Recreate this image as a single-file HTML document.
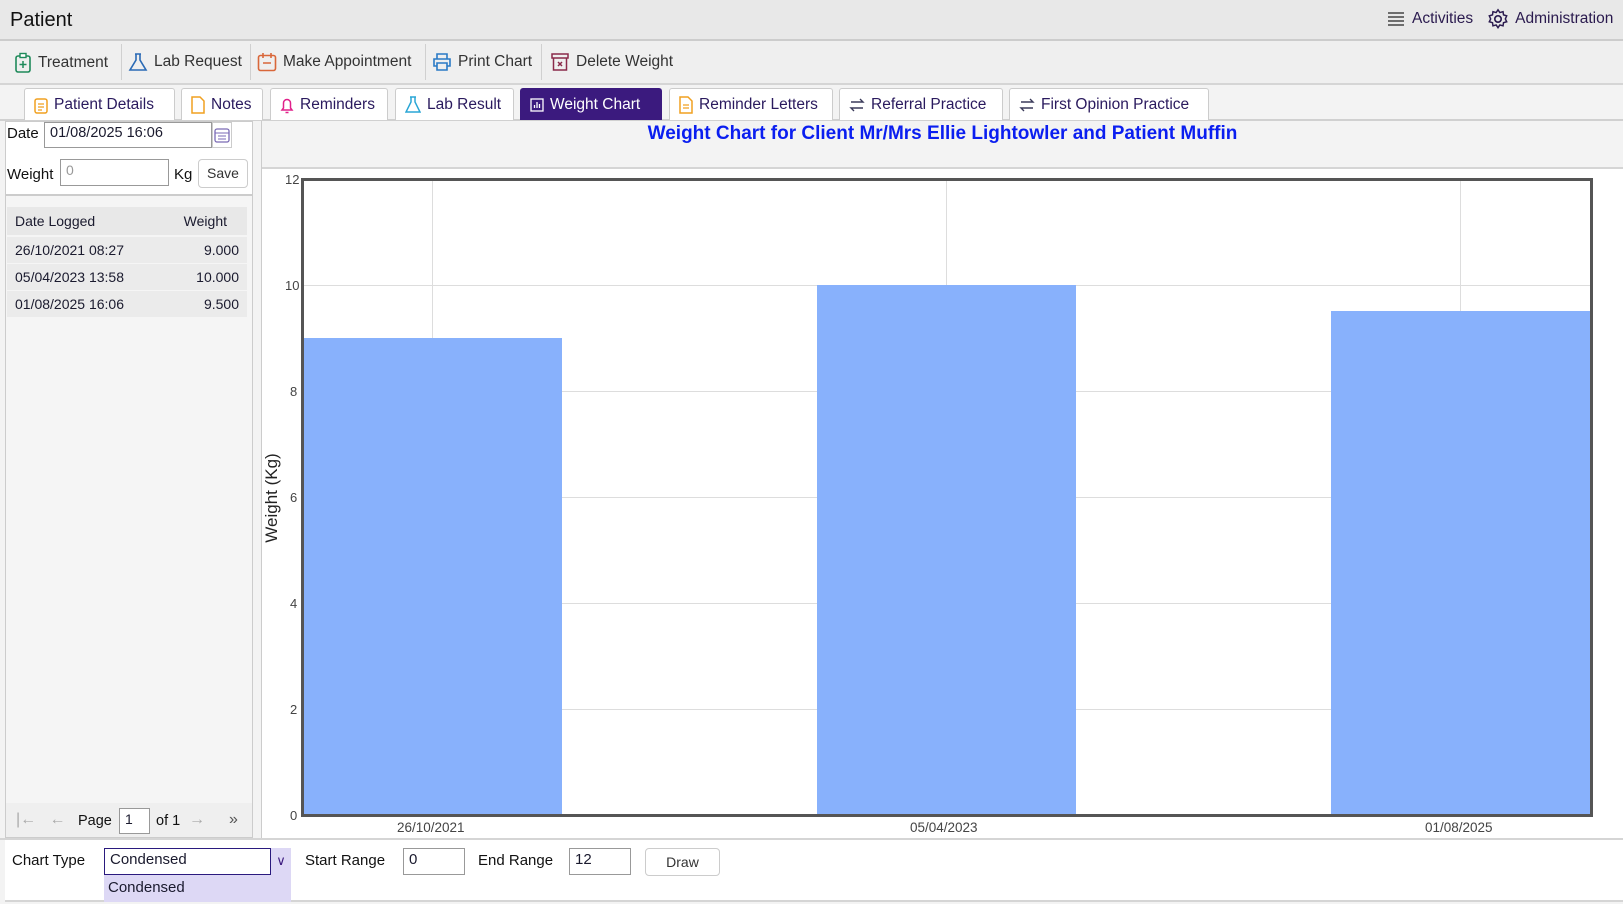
<!DOCTYPE html>
<html><head><meta charset="utf-8"><style>
*{box-sizing:border-box;margin:0;padding:0}
body{width:1623px;height:904px;background:#f3f3f3;font-family:"Liberation Sans",sans-serif;color:#1a1a2e;position:relative;overflow:hidden;font-size:15px}
.a{position:absolute;white-space:nowrap}
.tb{display:flex;align-items:center;gap:6px;position:absolute;top:52px;font-size:15.5px;color:#333;white-space:nowrap}
.sep{position:absolute;top:44px;width:1px;height:36px;background:#d0d0d0}
.tab{position:absolute;top:88px;height:32px;background:#fff;border:1px solid #ccc;border-bottom:none;border-radius:3px 3px 0 0;display:flex;align-items:center;padding:0 9px;gap:6px;font-size:15.5px;color:#2a1a5e;white-space:nowrap;overflow:hidden}
.tab.on{background:#3b1a7e;color:#fff;border-color:#3b1a7e}
.box{position:absolute;background:#fff;border:1px solid #999;font-size:14px;padding:2px 5px}
.lbl{position:absolute;font-size:15px;color:#111;white-space:nowrap}
.row{position:absolute;left:7px;width:240px;height:26px;background:#ebebeb;font-size:14px;display:flex;justify-content:space-between;align-items:center;padding:0 8px}
.grid{position:absolute;background:#ddd}
.bar{position:absolute;background:#88b1fc}
</style></head><body>
<div class="a" style="left:0;top:0;width:1623px;height:41px;background:#e8e8e8;border-bottom:2px solid #ccc"></div>
<div class="a" style="left:10px;top:9px;font-size:20px;color:#111">Patient</div>
<div class="a" style="left:1386px;top:8px;font-size:15.5px;display:flex;align-items:center;gap:6px;color:#2a1a4e">
<svg width="20" height="18"><g stroke="#444" stroke-width="1.5"><path d="M2 3h16M2 7h16M2 11h16M2 15h16"/></g></svg>Activities
<svg width="22" height="22" style="margin-left:8px" viewBox="0 0 24 24"><circle cx="12" cy="12" r="3.5" fill="none" stroke="#2a1a4e" stroke-width="1.8"/><path d="M12 2l2 3 3.5-1 .5 3.5 3.5 1-1.5 3.5 1.5 3-3.5 1-.5 3.5-3.5-1-2 3-2-3-3.5 1-.5-3.5-3.5-1 1.5-3-1.5-3.5 3.5-1 .5-3.5 3.5 1z" fill="none" stroke="#2a1a4e" stroke-width="1.6"/></svg>Administration</div>

<div class="a" style="left:0;top:41px;width:1623px;height:44px;background:#efefef;border-bottom:2px solid #d5d5d5"></div>
<div class="tb" style="left:14px"><svg width="18" height="22"><rect x="2" y="4" width="14" height="16" rx="2" fill="none" stroke="#1e8a5a" stroke-width="1.6"/><rect x="6" y="1.5" width="6" height="4" fill="#fff" stroke="#1e8a5a" stroke-width="1.4"/><path d="M9 9v7M5.5 12.5h7" stroke="#1e8a5a" stroke-width="1.5"/></svg>Treatment</div>
<div class="sep" style="left:121px"></div>
<div class="tb" style="left:128px"><svg width="20" height="20"><path d="M7 2h6M8 2v6L2 18h16L12 8V2" fill="none" stroke="#2a6ab5" stroke-width="1.6"/></svg>Lab Request</div>
<div class="sep" style="left:250px"></div>
<div class="tb" style="left:257px"><svg width="20" height="20"><rect x="1.5" y="3.5" width="17" height="15" rx="2" fill="none" stroke="#d9673a" stroke-width="1.6"/><path d="M6 1v5M14 1v5M6 11h8" stroke="#d9673a" stroke-width="1.6"/></svg>Make Appointment</div>
<div class="sep" style="left:425px"></div>
<div class="tb" style="left:432px"><svg width="20" height="20"><path d="M5 7V2h10v5M5 14H2V7h16v7h-3M5 11h10v7H5z" fill="none" stroke="#2a7ac5" stroke-width="1.6"/></svg>Print Chart</div>
<div class="sep" style="left:541px"></div>
<div class="tb" style="left:550px"><svg width="20" height="20"><rect x="2" y="2" width="16" height="4" fill="none" stroke="#8a2a4a" stroke-width="1.5"/><path d="M3.5 6v12h13V6M8 10l4 4M12 10l-4 4" fill="none" stroke="#8a2a4a" stroke-width="1.5"/></svg>Delete Weight</div>

<div class="a" style="left:0;top:119px;width:1623px;height:2px;background:#d0d0d0"></div>
<div class="tab" style="left:24px;width:151px"><svg width="14" height="18"><rect x="1" y="3" width="12" height="14" rx="2" fill="none" stroke="#f0a020" stroke-width="1.5"/><path d="M4 8h6M4 11h6M4 14h4" stroke="#f0a020" stroke-width="1.2"/></svg>Patient Details</div>
<div class="tab" style="left:181px;width:82px"><svg width="14" height="18"><path d="M1 1h8l4 4v12H1z" fill="none" stroke="#f0a020" stroke-width="1.5"/></svg>Notes</div>
<div class="tab" style="left:270px;width:118px"><svg width="14" height="18"><path d="M2 14h10l-1.5-2V7a3.5 3.5 0 00-7 0v5zM5.5 16.5h3" fill="none" stroke="#e0208a" stroke-width="1.5"/></svg>Reminders</div>
<div class="tab" style="left:395px;width:119px"><svg width="16" height="18"><path d="M5 1h6M6 1v5L1 16h14L10 6V1" fill="none" stroke="#2aa6d5" stroke-width="1.5"/></svg>Lab Result</div>
<div class="tab on" style="left:520px;width:142px"><svg width="14" height="16"><rect x="1" y="2" width="12" height="12" fill="none" stroke="#fff" stroke-width="1.3"/><path d="M4.5 11V8M7 11V5M9.5 11V7" stroke="#fff" stroke-width="1.3"/></svg>Weight Chart</div>
<div class="tab" style="left:669px;width:164px"><svg width="14" height="18"><path d="M1 1h8l4 4v12H1z" fill="none" stroke="#f0a020" stroke-width="1.5"/><path d="M4 9h6M4 12h6" stroke="#f0a020" stroke-width="1.2"/></svg>Reminder Letters</div>
<div class="tab" style="left:839px;width:164px"><svg width="16" height="18"><path d="M2 6h12l-3-3M14 12H2l3 3" fill="none" stroke="#3a3a5a" stroke-width="1.4"/></svg>Referral Practice</div>
<div class="tab" style="left:1009px;width:200px"><svg width="16" height="18"><path d="M2 6h12l-3-3M14 12H2l3 3" fill="none" stroke="#3a3a5a" stroke-width="1.4"/></svg>First Opinion Practice</div>

<div class="a" style="left:5px;top:121px;width:248px;height:717px;background:#f5f5f5;border:1px solid #ccc"></div>
<div class="a" style="left:6px;top:122px;width:246px;height:74px;background:#fff;border-bottom:2px solid #ccc"></div>
<div class="lbl" style="left:7px;top:125px">Date</div>
<div class="box" style="left:44px;top:122px;width:168px;height:26px;font-size:14.5px">01/08/2025 16:06</div>
<div class="a" style="left:212px;top:122px;width:20px;height:26px;border:1px solid #ccc;background:#fff"><svg width="18" height="20" style="margin-top:3px"><rect x="2" y="3" width="14" height="13" rx="2" fill="none" stroke="#7a6ab5" stroke-width="1.3"/><path d="M2 7h14M5 10h8M5 13h8" stroke="#7a6ab5" stroke-width="1"/></svg></div>
<div class="lbl" style="left:7px;top:166px">Weight</div>
<div class="box" style="left:60px;top:159px;width:109px;height:27px;color:#999">0</div>
<div class="lbl" style="left:174px;top:166px">Kg</div>
<div class="a" style="left:198px;top:159px;width:50px;height:29px;border:1px solid #ccc;border-radius:4px;background:#fff;font-size:14px;text-align:center;line-height:27px;color:#333">Save</div>
<div class="row" style="top:207px;height:28px;background:#e8e8e8;padding-left:8px;padding-right:20px"><span>Date Logged</span><span>Weight</span></div>
<div class="row" style="top:237px"><span>26/10/2021 08:27</span><span>9.000</span></div>
<div class="row" style="top:264px"><span>05/04/2023 13:58</span><span>10.000</span></div>
<div class="row" style="top:291px"><span>01/08/2025 16:06</span><span>9.500</span></div>
<div class="a" style="left:6px;top:803px;width:246px;height:34px;background:#efefef"></div>
<div class="a" style="left:16px;top:811px;color:#aaa;font-size:16px">|←&nbsp;&nbsp;&nbsp;←</div>
<div class="lbl" style="left:78px;top:813px;font-size:14.5px">Page</div>
<div class="box" style="left:119px;top:808px;width:31px;height:26px">1</div>
<div class="lbl" style="left:156px;top:813px;font-size:14.5px">of 1</div>
<div class="a" style="left:189px;top:811px;color:#aaa;font-size:16px">→</div>
<div class="a" style="left:229px;top:811px;color:#555;font-size:16px">»</div>

<div class="a" style="left:261px;top:121px;width:1362px;height:717px;background:#fff;border-left:1px solid #ccc"></div>
<div class="a" style="left:262px;top:121px;width:1361px;height:48px;background:#f3f3f3;border-bottom:2px solid #d5d5d5"></div>
<div class="a" style="left:262px;top:123px;width:1361px;text-align:center;font-weight:bold;font-size:19px;color:#0a1ef0">Weight Chart for Client Mr/Mrs Ellie Lightowler and Patient Muffin</div>
<div class="grid" style="left:302px;top:285px;width:1289px;height:1px"></div>
<div class="grid" style="left:302px;top:391px;width:1289px;height:1px"></div>
<div class="grid" style="left:302px;top:497px;width:1289px;height:1px"></div>
<div class="grid" style="left:302px;top:603px;width:1289px;height:1px"></div>
<div class="grid" style="left:302px;top:709px;width:1289px;height:1px"></div>
<div class="grid" style="left:432px;top:179px;width:1px;height:636px"></div>
<div class="grid" style="left:946px;top:179px;width:1px;height:636px"></div>
<div class="grid" style="left:1460px;top:179px;width:1px;height:636px"></div>
<div class="bar" style="left:302px;top:338px;width:260px;height:477px"></div>
<div class="bar" style="left:817px;top:285px;width:259px;height:530px"></div>
<div class="bar" style="left:1331px;top:311px;width:260px;height:504px"></div>
<div class="a" style="left:301px;top:178px;width:1292px;height:639px;border:3px solid #555"></div>
<div class="a" style="left:285px;top:172px;font-size:13px;color:#444">12</div>
<div class="a" style="left:285px;top:278px;font-size:13px;color:#444">10</div>
<div class="a" style="left:290px;top:384px;font-size:13px;color:#444">8</div>
<div class="a" style="left:290px;top:490px;font-size:13px;color:#444">6</div>
<div class="a" style="left:290px;top:596px;font-size:13px;color:#444">4</div>
<div class="a" style="left:290px;top:702px;font-size:13px;color:#444">2</div>
<div class="a" style="left:290px;top:808px;font-size:13px;color:#444">0</div>
<div class="a" style="left:222px;top:488px;font-size:17px;color:#222;transform:rotate(-90deg);width:100px;text-align:center">Weight (Kg)</div>
<div class="a" style="left:397px;top:820px;font-size:13.5px;color:#444">26/10/2021</div>
<div class="a" style="left:910px;top:820px;font-size:13.5px;color:#444">05/04/2023</div>
<div class="a" style="left:1425px;top:820px;font-size:13.5px;color:#444">01/08/2025</div>

<div class="a" style="left:0;top:838px;width:1623px;height:2px;background:#d5d5d5"></div>
<div class="a" style="left:5px;top:840px;width:1618px;height:62px;background:#fff;border-bottom:2px solid #d5d5d5"></div>
<div class="lbl" style="left:12px;top:852px">Chart Type</div>
<div class="box" style="left:104px;top:848px;width:167px;height:27px;border:1px solid #2a1a7e;font-size:15px">Condensed</div>
<div class="a" style="left:271px;top:848px;width:20px;height:27px;background:#ddd8f5;color:#3b1a7e;text-align:center;line-height:25px;font-size:13px">∨</div>
<div class="a" style="left:104px;top:875px;width:187px;height:27px;background:#ddd8f5;font-size:15px;padding:4px 4px">Condensed</div>
<div class="lbl" style="left:305px;top:852px">Start Range</div>
<div class="box" style="left:403px;top:848px;width:62px;height:27px;font-size:15px">0</div>
<div class="lbl" style="left:478px;top:852px">End Range</div>
<div class="box" style="left:569px;top:848px;width:62px;height:27px;font-size:15px">12</div>
<div class="a" style="left:645px;top:848px;width:75px;height:28px;border:1px solid #ccc;border-radius:4px;font-size:14px;text-align:center;line-height:26px;color:#333">Draw</div>
</body></html>
